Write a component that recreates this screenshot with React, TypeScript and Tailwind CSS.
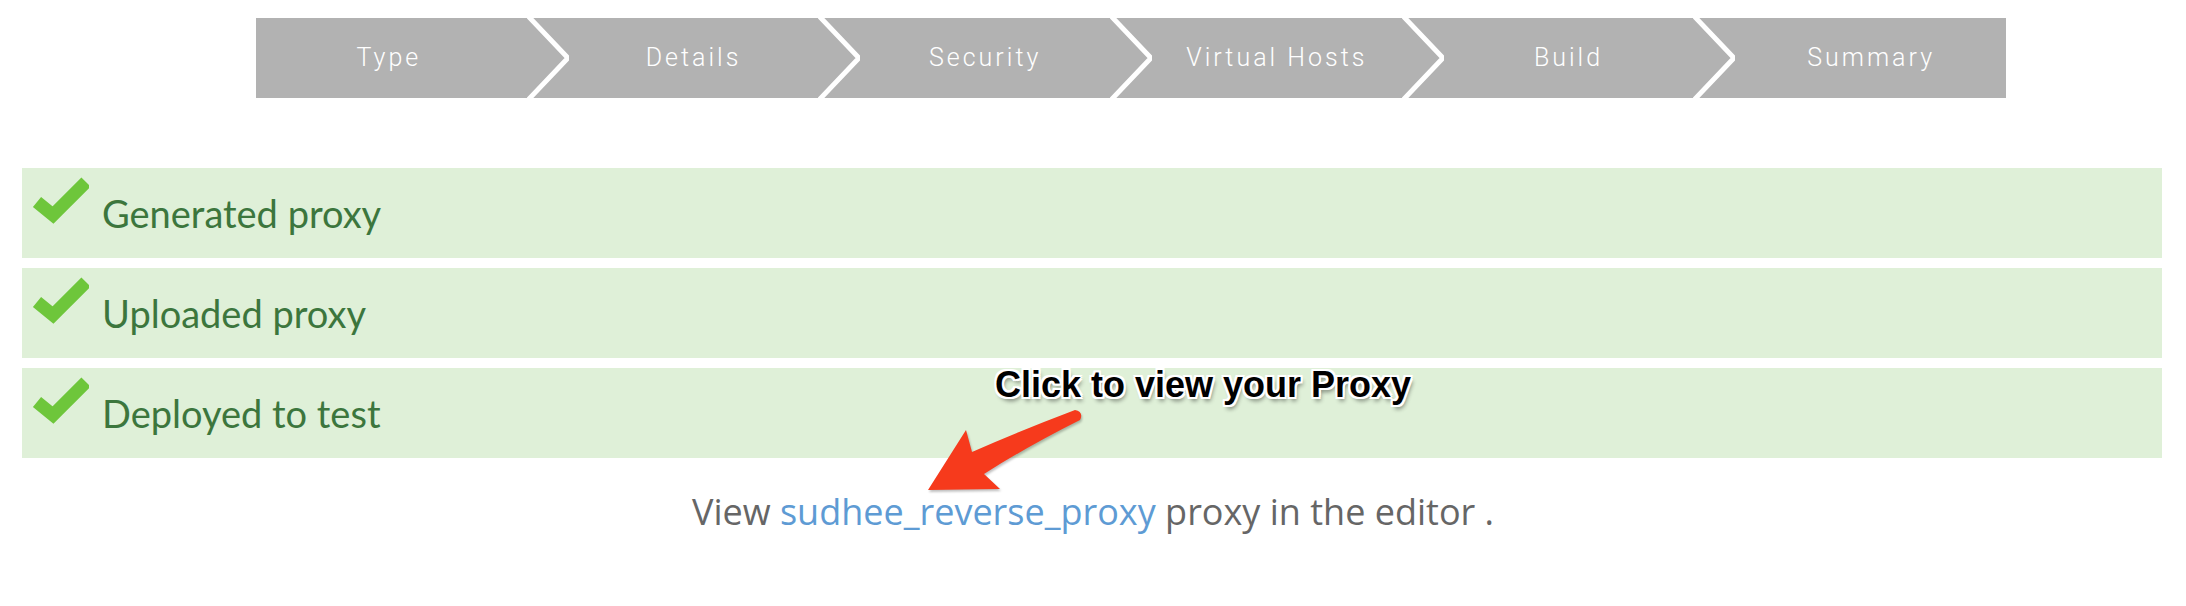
const STEPS = ["Type", "Details", "Security", "Virtual Hosts", "Build", "Summary"];

const DONE = ["Generated proxy", "Uploaded proxy", "Deployed to test"];

function Chevron() {
  return (
    <svg
      className="absolute top-0 right-[-21px] z-10"
      width="42"
      height="80"
      viewBox="0 0 42 80"
    >
      <polyline
        points="0,-3 41,40 0,83"
        fill="none"
        stroke="#ffffff"
        strokeWidth="5"
      />
    </svg>
  );
}

function Check() {
  return (
    <svg width="57" height="48" viewBox="0 0 57 48" className="shrink-0 self-start mt-[9px]">
      <polyline
        points="5,25 21,38 54,5"
        fill="none"
        stroke="#6ec63b"
        strokeWidth="13"
        strokeLinejoin="miter"
      />
    </svg>
  );
}

function Arrow() {
  return (
    <svg
      className="absolute left-[900px] top-[400px] drop-shadow-[1px_2px_1px_rgba(0,0,0,0.25)]"
      width="200"
      height="100"
      viewBox="0 0 200 100"
    >
      <path
        d="M28 90 L100 89 L84 74 Q128 46 180 20 Q184 12 175 10 Q122 30 72 52 L66 30 Z"
        fill="#f63a1c"
      />
    </svg>
  );
}

export default function App() {
  return (
    <div className="relative w-[2186px] h-[606px] bg-white overflow-hidden">
      <div className="ml-[256px] pt-[18px]">
        <div className="grid grid-cols-6 w-[1750px] h-[80px] bg-[#b2b2b2] overflow-hidden">
          {STEPS.map((s, i) => (
            <div
              key={s}
              className={
                "relative flex items-center justify-center text-white text-[25px] font-light tracking-[3px] font-[Roboto,sans-serif] " +
                (i === 0 ? "pr-[26px]" : i === STEPS.length - 1 ? "pl-[22px]" : "")
              }
            >
              {s}
              {i < STEPS.length - 1 && <Chevron />}
            </div>
          ))}
        </div>
      </div>

      <div className="ml-[22px] mt-[70px] w-[2140px] flex flex-col gap-[10px]">
        {DONE.map((d) => (
          <div key={d} className="h-[90px] flex items-center bg-[#dff0d8] pl-[10px]">
            <Check />
            <span className="ml-[13px] text-[38px] text-[#3c763d] font-[Lato,sans-serif] leading-none">
              {d}
            </span>
          </div>
        ))}
      </div>

      <p className="mt-[33px] text-center text-[36px] leading-[41px] text-[#666666] font-['Open_Sans',sans-serif]">
        View <a className="text-[#5e9bd4]">sudhee_reverse_proxy</a> proxy in the editor .
      </p>

      <div className="absolute left-[995px] top-[367px] text-[36px] leading-none font-bold text-black font-['Liberation_Sans',Arial,sans-serif] [text-shadow:2px_0_0_#fff,-2px_0_0_#fff,0_2px_0_#fff,0_-2px_0_#fff,2px_2px_0_#fff,-2px_-2px_0_#fff,2px_-2px_0_#fff,-2px_2px_0_#fff,2px_4px_4px_rgba(0,0,0,0.45)]">
        Click to view your Proxy
      </div>
      <Arrow />
    </div>
  );
}
